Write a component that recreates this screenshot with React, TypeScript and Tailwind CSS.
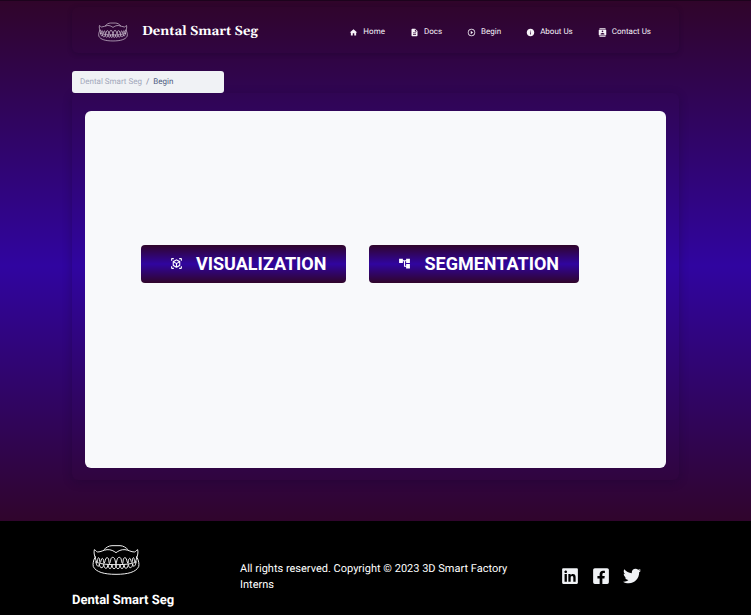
import React from "react";
import {
  MdHome,
  MdDescription,
  MdPlayCircleOutline,
  MdInfo,
  MdContacts,
  MdViewInAr,
  MdAccountTree,
} from "react-icons/md";
import { FaLinkedin, FaFacebookSquare, FaTwitter } from "react-icons/fa";

function TeethLogo({ className }: { className: string }) {
  return (
    <svg
      viewBox="0 0 144 96"
      className={className}
      fill="none"
      stroke="currentColor"
      strokeWidth="3"
      strokeLinejoin="round"
      strokeLinecap="round"
      aria-hidden="true"
    >
      <path d="M10 42C7 34 5 26 7 17c4 0 5 7 10 7 10 0 17-6 28-7 12-1 20 4 27 9 7-5 15-10 27-9 11 1 18 7 28 7 5 0 6-7 10-7 2 9 0 17-3 25" />
      <path d="M36 17c6-6 14-12 24-12h24c10 0 18 6 24 12" />
      <path d="M8 42c-4 8-6 18-4 26 8 16 32 23 68 23s60-7 68-23c2-8 0-18-4-26" />
      <path d="M10 38c0 8 2 12 5 16 3-5 1-12 5-13 4 2 2 10 4 15 4-3 3-13 7-13 5 2 3 10 5 15 4-3 3-17 9-17 7 0 5 13 7 18 5-3 2-19 10-19 8 0 7 13 10 20" />
      <path d="M134 38c0 8-2 12-5 16-3-5-1-12-5-13-4 2-2 10-4 15-4-3-3-13-7-13-5 2-3 10-5 15-4-3-3-17-9-17-7 0-5 13-7 18-5-3-2-19-10-19-8 0-7 13-10 20" />
      <path d="M11 54c10 5 30 8 61 8s51-3 61-8" />
      <path d="M12 54c1 10 4 14 9 12l1-6c1 8 3 12 8 11 4-1 4-6 5-10 1 8 3 12 7 12s5-6 6-12c1 8 3 13 6 13s5-6 6-13c1 8 2 13 6 13s6-5 6-13c0 8 2 13 6 13s5-5 6-13c1 8 3 13 6 13s5-6 6-13c1 7 2 12 6 12s6-6 7-12c1 5 2 10 6 10s6-4 7-11l1 6c5 2 8-2 9-12" />
    </svg>
  );
}

const links = [
  { label: "Home", Icon: MdHome },
  { label: "Docs", Icon: MdDescription },
  { label: "Begin", Icon: MdPlayCircleOutline },
  { label: "About Us", Icon: MdInfo },
  { label: "Contact Us", Icon: MdContacts },
];

const actions = [
  { label: "VISUALIZATION", Icon: MdViewInAr },
  { label: "SEGMENTATION", Icon: MdAccountTree },
];

const socials = [
  { label: "LinkedIn", Icon: FaLinkedin },
  { label: "Facebook", Icon: FaFacebookSquare },
  { label: "Twitter", Icon: FaTwitter },
];

export default function App() {
  return (
    <div className="flex min-h-screen flex-col bg-black font-['Roboto',sans-serif] [text-rendering:geometricPrecision]">
      <div className="border-t border-[#1c031c] bg-linear-to-b/srgb from-[#30052a] via-[#3005a0] via-51% to-[#30052c] px-[72px] pt-1.5 pb-[41px]">
        <header className="flex h-[46px] items-center justify-between rounded-md pr-7 pl-[26px] shadow-[0_1px_5px_#16002a55]">
          <a href="#home" className="flex items-center gap-3.5 pt-1 text-white">
            <TeethLogo className="h-5 w-[30px] text-[#e6dde9]" />
            <span className="font-['Gelasio','Georgia','Liberation_Serif',serif] text-[13px] leading-5 font-bold whitespace-nowrap">
              Dental Smart Seg
            </span>
          </a>
          <nav className="flex items-center gap-[25px] pt-1">
            {links.map(({ label, Icon }) => (
              <a
                key={label}
                href="#"
                className="flex items-center gap-[5px] text-[8px] leading-3 whitespace-nowrap text-[#f6f2f8]"
              >
                <Icon className="size-[9px]" />
                {label}
              </a>
            ))}
          </nav>
        </header>

        <nav
          aria-label="Breadcrumb"
          className="relative z-10 mt-[18px] flex h-[22px] w-[152px] items-center gap-1 rounded-[3px] bg-[#f0f2f5] px-2 text-[8px] text-[#a3a8bb]"
        >
          <a href="#">Dental Smart Seg</a>
          <span className="text-[#7b809a]">/</span>
          <span className="text-[#4d5b80]">Begin</span>
        </nav>

        <main className="rounded-md px-[13px] pt-[18px] pb-3 shadow-[0_2px_10px_#16002a55]">
          <section className="flex h-[357px] items-center rounded-md bg-[#f8f9fb] px-14">
            <div className="flex gap-[23px] pb-[52px]">
              {actions.map(({ label, Icon }) => (
                <button
                  key={label}
                  type="button"
                  className="flex h-[38px] items-center gap-[13px] rounded-[4px] bg-linear-to-b/srgb from-[#30052a] via-[#3005a0] to-[#30052a] pr-5 pl-[29px] text-[18px] font-bold whitespace-nowrap text-white"
                >
                  <Icon className="size-[13px]" />
                  {label}
                </button>
              ))}
            </div>
          </section>
        </main>
      </div>

      <footer className="flex grow items-start px-[72px] pt-[23px] text-white">
        <div className="flex w-[168px] shrink-0 flex-col">
          <TeethLogo className="ml-5 h-8 w-12 text-[#f0f0f0]" />
          <span className="mt-[15px] text-[13px] leading-5 font-bold">Dental Smart Seg</span>
        </div>
        <p className="w-[280px] pt-[17px] text-[11px] leading-4">
          All rights reserved. Copyright © 2023 3D Smart Factory Interns
        </p>
        <div className="ml-auto flex gap-[13px] pt-[23px] pr-[38px] text-[#f0f2f5]">
          {socials.map(({ label, Icon }) => (
            <a key={label} href="#" aria-label={label}>
              <Icon className="size-[18px]" />
            </a>
          ))}
        </div>
      </footer>
    </div>
  );
}
